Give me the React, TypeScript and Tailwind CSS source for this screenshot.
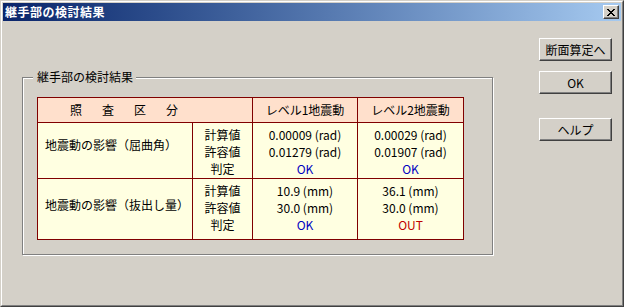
import React from 'react';

const font = "font-['Noto_Sans_CJK_JP','Liberation_Sans',sans-serif]";

const winBtn =
  'w-[73px] h-[23px] flex items-center justify-center bg-[#d4d0c8] border border-t-white border-l-white border-r-[#404040] border-b-[#404040] shadow-[inset_-1px_-1px_#808080] text-[12px] leading-none text-black';

const CloseGlyph: React.FC = () => (
  <svg width="8" height="7" viewBox="0 0 8 7" shapeRendering="crispEdges">
    <path
      d="M0 0h2v1H0zM6 0h2v1H6zM1 1h2v1H1zM5 1h2v1H5zM2 2h4v1H2zM3 3h2v1H3zM2 4h4v1H2zM1 5h2v1H1zM5 5h2v1H5zM0 6h2v1H0zM6 6h2v1H6z"
      fill="#000"
    />
  </svg>
);

type Row = {
  label: string;
  lv1: string[];
  lv2: string[];
  ok1: boolean;
  ok2: boolean;
  h: string;
  pt: string;
};

const rows: Row[] = [
  {
    label: '地震動の影響（屈曲角）',
    lv1: ['0.00009 (rad)', '0.01279 (rad)'],
    lv2: ['0.00029 (rad)', '0.01907 (rad)'],
    ok1: true,
    ok2: true,
    h: 'h-[56px]',
    pt: 'pt-[13px]',
  },
  {
    label: '地震動の影響（抜出し量）',
    lv1: ['10.9 (mm)', '30.0 (mm)'],
    lv2: ['36.1 (mm)', '30.0 (mm)'],
    ok1: true,
    ok2: false,
    h: 'h-[61px]',
    pt: 'pt-[17px]',
  },
];

const Verdict: React.FC<{ ok: boolean }> = ({ ok }) =>
  ok ? <div className="text-[#0000c0]">OK</div> : <div className="text-[#c00000]">OUT</div>;

const App: React.FC = () => {
  return (
    <div
      className={`w-[624px] h-[307px] bg-[#d4d0c8] border border-t-[#d4d0c8] border-l-[#d4d0c8] border-r-[#404040] border-b-[#404040] text-[12px] text-black ${font}`}
    >
      <div className="h-full border border-t-white border-l-white border-r-[#808080] border-b-[#808080] p-px flex flex-col">
        {/* Title bar */}
        <div className="h-[18px] flex items-center bg-linear-to-r from-[#0a246a] to-[#a6caf0] pl-[2px] pr-[2px]">
          <span className="text-white font-bold text-[12px] leading-none tracking-[0.5px]">継手部の検討結果</span>
          <div className="ml-auto w-[16px] h-[14px] flex items-center justify-center bg-[#d4d0c8] border border-t-white border-l-white border-r-[#404040] border-b-[#404040] shadow-[inset_-1px_-1px_#808080]">
            <CloseGlyph />
          </div>
        </div>

        {/* Body */}
        <div className="flex items-start">
          {/* Group box */}
          <div className="relative ml-[19px] mt-[56px] w-[471px] h-[178px] border border-[#808080] shadow-[inset_1px_1px_white,1px_1px_white] pl-[14px] pt-[19px]">
            <span className="absolute left-[10px] top-[-8px] pl-[4px] pr-[3px] bg-[#d4d0c8] leading-[14px]">
              継手部の検討結果
            </span>

            <div className="w-[427px] border-l border-t border-[#800000]">
              {/* Header */}
              <div className="flex h-[25px] bg-[#ffe0cc]">
                <div className="w-[215px] border-r border-b border-[#800000] flex items-center pl-[32px] gap-[20px]">
                  <span>照</span>
                  <span>査</span>
                  <span>区</span>
                  <span>分</span>
                </div>
                <div className="w-[105px] border-r border-b border-[#800000] flex items-center justify-center">
                  レベル1地震動
                </div>
                <div className="w-[106px] border-r border-b border-[#800000] flex items-center justify-center">
                  レベル2地震動
                </div>
              </div>

              {rows.map((r) => (
                <div key={r.label} className={`flex ${r.h} bg-[#ffffe1] leading-[17px]`}>
                  <div className={`w-[155px] border-r border-b border-[#800000] pl-[7px] ${r.pt}`}>{r.label}</div>
                  <div className="w-[60px] border-r border-b border-[#800000] pt-[3px] text-center">
                    <div>計算値</div>
                    <div>許容値</div>
                    <div>判定</div>
                  </div>
                  <div className="w-[105px] border-r border-b border-[#800000] pt-[3px] text-center">
                    <div>{r.lv1[0]}</div>
                    <div>{r.lv1[1]}</div>
                    <Verdict ok={r.ok1} />
                  </div>
                  <div className="w-[106px] border-r border-b border-[#800000] pt-[3px] text-center">
                    <div>{r.lv2[0]}</div>
                    <div>{r.lv2[1]}</div>
                    <Verdict ok={r.ok2} />
                  </div>
                </div>
              ))}
            </div>
          </div>

          {/* Buttons */}
          <div className="ml-[46px] mt-[17px] flex flex-col">
            <div className={winBtn}>断面算定へ</div>
            <div className={`${winBtn} mt-[10px]`}>OK</div>
            <div className={`${winBtn} mt-[24px]`}>ヘルプ</div>
          </div>
        </div>
      </div>
    </div>
  );
};

export default App;
